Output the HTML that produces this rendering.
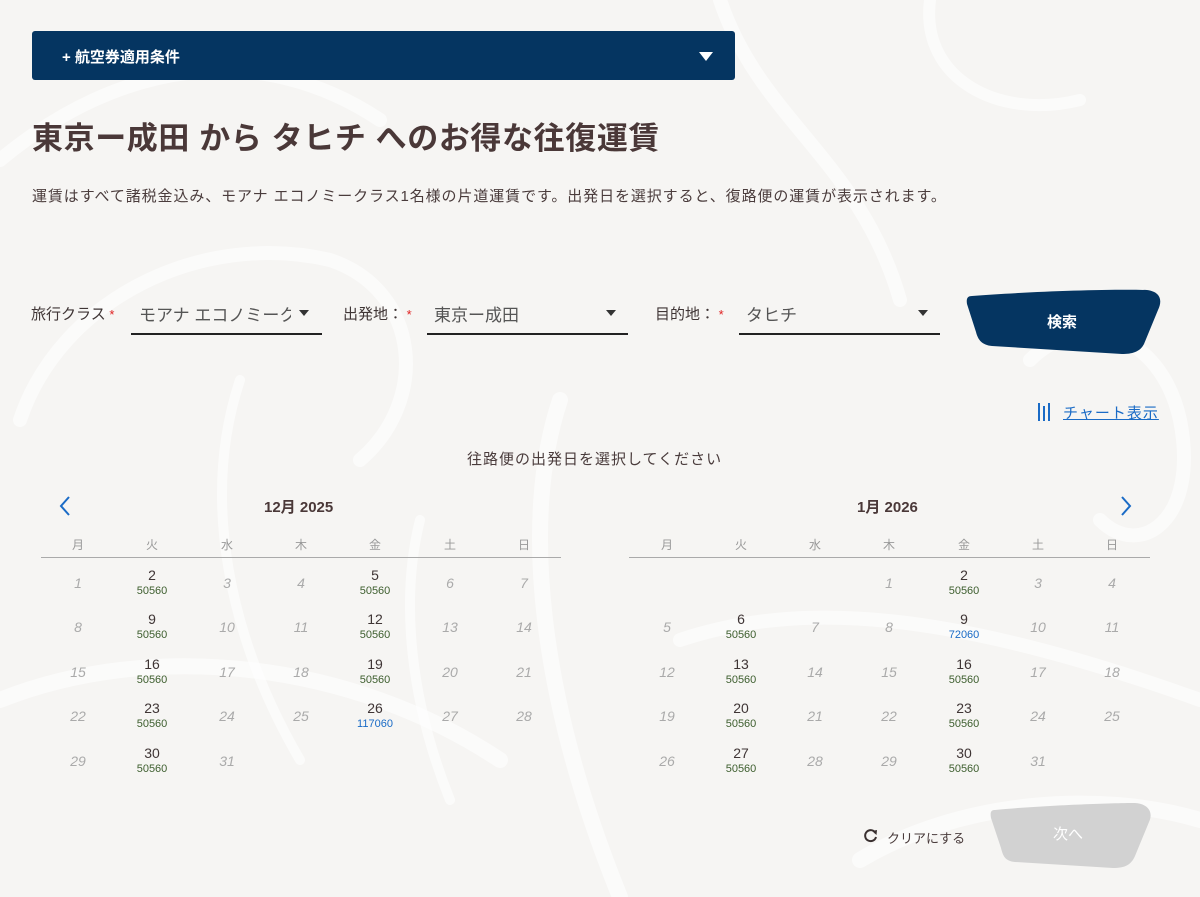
<!DOCTYPE html>
<html><head><meta charset="utf-8"><style>
*{margin:0;padding:0;box-sizing:border-box}
body{width:1200px;height:897px;overflow:hidden;background:#f6f5f3;font-family:"Liberation Sans","Noto Sans CJK JP",sans-serif;color:#4a3c3c;position:relative}
.a{position:absolute;white-space:nowrap}
.bar{left:32px;top:31px;width:703px;height:49px;background:#053561;border-radius:3px;color:#fff;font-size:15px;font-weight:bold;padding:15px 0 0 30px}
.tri{position:absolute;right:22px;top:21px;width:0;height:0;border-left:7px solid transparent;border-right:7px solid transparent;border-top:9px solid #fff}
h1{position:absolute;left:32px;top:113px;font-size:31px;font-weight:bold;color:#4a3838;letter-spacing:0.6px}
.lbl{font-size:15px;color:#3f3535;top:303px}
.st{color:#e02020;font-size:13px}
.val{font-size:17px;color:#555;top:301px}
.ul{height:2px;background:#222;top:333px}
.dd{width:0;height:0;border-left:5px solid transparent;border-right:5px solid transparent;border-top:6px solid #333;top:310px}
.mh{font-size:15px;font-weight:bold;color:#4a3838;top:496px}
.wd{font-size:12px;color:#999;top:536px;width:74px;text-align:center}
.hr{height:1px;background:#aaa;top:557px}
.p,.u{position:absolute;width:74px;text-align:center}
.p b{display:block;font-weight:normal;font-size:14px;line-height:18px;color:#3f3535}
.p i{display:block;font-style:normal;font-size:11px;line-height:14px;color:#3d5e2e}
.p i.bl{color:#1a6bc6}
.u{font-style:italic;font-size:14px;line-height:18px;color:#aaa}
</style></head><body>
<svg class="a" style="left:0;top:0" width="1200" height="897" viewBox="0 0 1200 897" fill="none" stroke="#fff" stroke-linecap="round" stroke-opacity="0.6">
<path d="M0 160 C120 60 260 40 380 120" stroke-width="14"/>
<path d="M20 420 C60 300 200 230 330 260 C420 290 430 400 360 460" stroke-width="14"/>
<path d="M560 400 C520 520 540 700 620 897" stroke-width="16"/>
<path d="M720 0 C760 120 860 160 900 300" stroke-width="14"/>
<path d="M930 0 C920 80 1000 120 1080 100" stroke-width="12"/>
<path d="M1030 360 C1080 310 1160 330 1180 420 C1200 520 1140 560 1100 520" stroke-width="14"/>
<path d="M0 700 C150 640 350 660 500 760" stroke-width="16"/>
<path d="M680 640 C800 600 950 610 1200 700" stroke-width="14"/>
<path d="M860 860 C960 800 1100 790 1200 820" stroke-width="16"/>
<path d="M240 380 C200 500 230 640 300 760" stroke-width="10"/>
<path d="M420 520 C400 600 410 700 450 800" stroke-width="10"/>
</svg>
<div class="a bar">+ 航空券適用条件<div class="tri"></div></div>
<h1>東京ー成田 から タヒチ へのお得な往復運賃</h1>
<div class="a" style="left:32px;top:185px;font-size:15px;letter-spacing:0.9px;color:#4a3c3c">運賃はすべて諸税金込み、モアナ エコノミークラス1名様の片道運賃です。出発日を選択すると、復路便の運賃が表示されます。</div>

<div class="a lbl" style="left:31px">旅行クラス<span class="st"> *</span></div>
<div class="a val" style="left:139px;width:152px;overflow:hidden">モアナ エコノミークラス</div>
<div class="a dd" style="left:299px"></div>
<div class="a ul" style="left:131px;width:191px"></div>
<div class="a lbl" style="left:343px">出発地：<span class="st"> *</span></div>
<div class="a val" style="left:434px">東京ー成田</div>
<div class="a dd" style="left:606px"></div>
<div class="a ul" style="left:427px;width:201px"></div>
<div class="a lbl" style="left:655px">目的地：<span class="st"> *</span></div>
<div class="a val" style="left:746px">タヒチ</div>
<div class="a dd" style="left:918px"></div>
<div class="a ul" style="left:739px;width:201px"></div>
<svg class="a" style="left:962px;top:288px" width="200" height="70"><path d="M10 8 C60 4 140 1 185 2 C200 4 200 14 196 22 L182 56 C178 64 170 66 160 66 L30 58 C20 57 16 52 14 44 L5 16 C4 10 6 8 10 8Z" fill="#053561"/></svg>
<div class="a" style="left:1047px;top:311px;color:#fff;font-size:15px;font-weight:bold">検索</div>

<div class="a" style="left:1038px;top:403px;width:2px;height:18px;background:#1a6bc6"></div>
<div class="a" style="left:1043px;top:406px;width:2px;height:15px;background:#1a6bc6"></div>
<div class="a" style="left:1048px;top:403px;width:2px;height:18px;background:#1a6bc6"></div>
<div class="a" style="left:1063px;top:402px;font-size:15px;letter-spacing:1px;color:#1a6bc6;text-decoration:underline">チャート表示</div>

<div class="a" style="left:467px;top:448px;font-size:15px;letter-spacing:1px;color:#4a3c3c">往路便の出発日を選択してください</div>

<svg class="a" style="left:57px;top:495px" width="16" height="22"><path d="M12 2 L4 11 L12 20" stroke="#1a6bc6" stroke-width="2" fill="none"/></svg>
<svg class="a" style="left:1118px;top:495px" width="16" height="22"><path d="M4 2 L12 11 L4 20" stroke="#1a6bc6" stroke-width="2" fill="none"/></svg>
<div class="a mh" style="left:264px">12月 2025</div>
<div class="a mh" style="left:857px">1月 2026</div>

<div class="a wd" style="left:41px">月</div><div class="a wd" style="left:115px">火</div><div class="a wd" style="left:190px">水</div><div class="a wd" style="left:264px">木</div><div class="a wd" style="left:338px">金</div><div class="a wd" style="left:413px">土</div><div class="a wd" style="left:487px">日</div>
<div class="a wd" style="left:630px">月</div><div class="a wd" style="left:704px">火</div><div class="a wd" style="left:778px">水</div><div class="a wd" style="left:852px">木</div><div class="a wd" style="left:927px">金</div><div class="a wd" style="left:1001px">土</div><div class="a wd" style="left:1075px">日</div>
<div class="a hr" style="left:41px;width:520px"></div>
<div class="a hr" style="left:629px;width:521px"></div>

<div class="u" style="left:41px;top:574px">1</div><div class="p" style="left:115px;top:566px"><b>2</b><i>50560</i></div><div class="u" style="left:190px;top:574px">3</div><div class="u" style="left:264px;top:574px">4</div><div class="p" style="left:338px;top:566px"><b>5</b><i>50560</i></div><div class="u" style="left:413px;top:574px">6</div><div class="u" style="left:487px;top:574px">7</div>
<div class="u" style="left:41px;top:618px">8</div><div class="p" style="left:115px;top:610px"><b>9</b><i>50560</i></div><div class="u" style="left:190px;top:618px">10</div><div class="u" style="left:264px;top:618px">11</div><div class="p" style="left:338px;top:610px"><b>12</b><i>50560</i></div><div class="u" style="left:413px;top:618px">13</div><div class="u" style="left:487px;top:618px">14</div>
<div class="u" style="left:41px;top:663px">15</div><div class="p" style="left:115px;top:655px"><b>16</b><i>50560</i></div><div class="u" style="left:190px;top:663px">17</div><div class="u" style="left:264px;top:663px">18</div><div class="p" style="left:338px;top:655px"><b>19</b><i>50560</i></div><div class="u" style="left:413px;top:663px">20</div><div class="u" style="left:487px;top:663px">21</div>
<div class="u" style="left:41px;top:707px">22</div><div class="p" style="left:115px;top:699px"><b>23</b><i>50560</i></div><div class="u" style="left:190px;top:707px">24</div><div class="u" style="left:264px;top:707px">25</div><div class="p" style="left:338px;top:699px"><b>26</b><i class="bl">117060</i></div><div class="u" style="left:413px;top:707px">27</div><div class="u" style="left:487px;top:707px">28</div>
<div class="u" style="left:41px;top:752px">29</div><div class="p" style="left:115px;top:744px"><b>30</b><i>50560</i></div><div class="u" style="left:190px;top:752px">31</div>

<div class="u" style="left:852px;top:574px">1</div><div class="p" style="left:927px;top:566px"><b>2</b><i>50560</i></div><div class="u" style="left:1001px;top:574px">3</div><div class="u" style="left:1075px;top:574px">4</div>
<div class="u" style="left:630px;top:618px">5</div><div class="p" style="left:704px;top:610px"><b>6</b><i>50560</i></div><div class="u" style="left:778px;top:618px">7</div><div class="u" style="left:852px;top:618px">8</div><div class="p" style="left:927px;top:610px"><b>9</b><i class="bl">72060</i></div><div class="u" style="left:1001px;top:618px">10</div><div class="u" style="left:1075px;top:618px">11</div>
<div class="u" style="left:630px;top:663px">12</div><div class="p" style="left:704px;top:655px"><b>13</b><i>50560</i></div><div class="u" style="left:778px;top:663px">14</div><div class="u" style="left:852px;top:663px">15</div><div class="p" style="left:927px;top:655px"><b>16</b><i>50560</i></div><div class="u" style="left:1001px;top:663px">17</div><div class="u" style="left:1075px;top:663px">18</div>
<div class="u" style="left:630px;top:707px">19</div><div class="p" style="left:704px;top:699px"><b>20</b><i>50560</i></div><div class="u" style="left:778px;top:707px">21</div><div class="u" style="left:852px;top:707px">22</div><div class="p" style="left:927px;top:699px"><b>23</b><i>50560</i></div><div class="u" style="left:1001px;top:707px">24</div><div class="u" style="left:1075px;top:707px">25</div>
<div class="u" style="left:630px;top:752px">26</div><div class="p" style="left:704px;top:744px"><b>27</b><i>50560</i></div><div class="u" style="left:778px;top:752px">28</div><div class="u" style="left:852px;top:752px">29</div><div class="p" style="left:927px;top:744px"><b>30</b><i>50560</i></div><div class="u" style="left:1001px;top:752px">31</div>

<svg class="a" style="left:863px;top:828px" width="16" height="16"><path d="M12.5 5 A5.5 5.5 0 1 0 13 9" stroke="#3a3030" stroke-width="2" fill="none"/><path d="M9 3 L14 2 L13.5 7Z" fill="#3a3030"/></svg>
<div class="a" style="left:887px;top:828px;font-size:13px;color:#4a3c3c">クリアにする</div>
<svg class="a" style="left:985px;top:800px" width="170" height="72"><path d="M10 10 C50 6 120 3 150 3 C165 4 168 14 164 22 L150 56 C146 65 140 68 128 68 L30 62 C20 61 18 56 16 48 L6 18 C5 12 6 10 10 10Z" fill="#d2d2d2"/></svg>
<div class="a" style="left:1053px;top:823px;color:#fff;font-size:15px">次へ</div>
</body></html>
